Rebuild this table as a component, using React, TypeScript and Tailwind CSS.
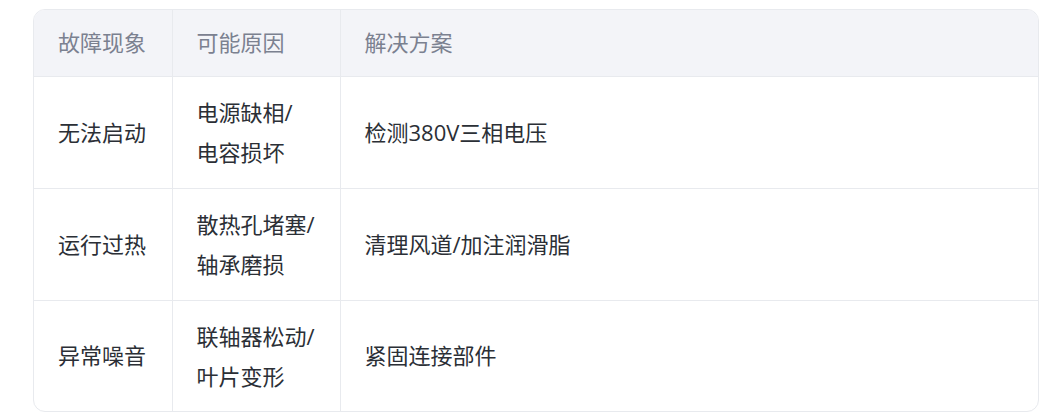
const rows = [
  { symptom: "无法启动", causes: ["电源缺相/", "电容损坏"], fix: "检测380V三相电压" },
  { symptom: "运行过热", causes: ["散热孔堵塞/", "轴承磨损"], fix: "清理风道/加注润滑脂" },
  { symptom: "异常噪音", causes: ["联轴器松动/", "叶片变形"], fix: "紧固连接部件" },
];

export default function App() {
  return (
    <div className="min-h-screen bg-white pl-[33px] pt-[9px] font-['Open_Sans','Noto_Sans_CJK_SC',sans-serif] text-[22px]">
      <div className="w-[1006px] overflow-hidden rounded-xl border border-[#e8eaee]">
        <table className="w-full border-collapse text-left">
          <colgroup>
            <col className="w-[138px]" />
            <col className="w-[168px]" />
            <col />
          </colgroup>
          <thead>
            <tr className="h-[66px] bg-[#f3f4f8] text-[#7b8190]">
              <th className="border-b border-[#e8eaee] px-6 font-normal">故障现象</th>
              <th className="border-b border-l border-[#e8eaee] px-6 font-normal">可能原因</th>
              <th className="border-b border-l border-[#e8eaee] px-6 font-normal">解决方案</th>
            </tr>
          </thead>
          <tbody className="text-[#2b2f36]">
            {rows.map((r, i) => {
              const last = i === rows.length - 1;
              return (
                <tr key={r.symptom} className={last ? "h-[111px]" : "h-[112px]"}>
                  <td className={`px-6 ${last ? "" : "border-b border-[#e8eaee]"}`}>{r.symptom}</td>
                  <td className={`border-l border-[#e8eaee] px-6 leading-[40px] ${last ? "" : "border-b"}`}>
                    {r.causes.map((c) => (
                      <div key={c}>{c}</div>
                    ))}
                  </td>
                  <td className={`border-l border-[#e8eaee] px-6 ${last ? "" : "border-b"}`}>{r.fix}</td>
                </tr>
              );
            })}
          </tbody>
        </table>
      </div>
    </div>
  );
}
